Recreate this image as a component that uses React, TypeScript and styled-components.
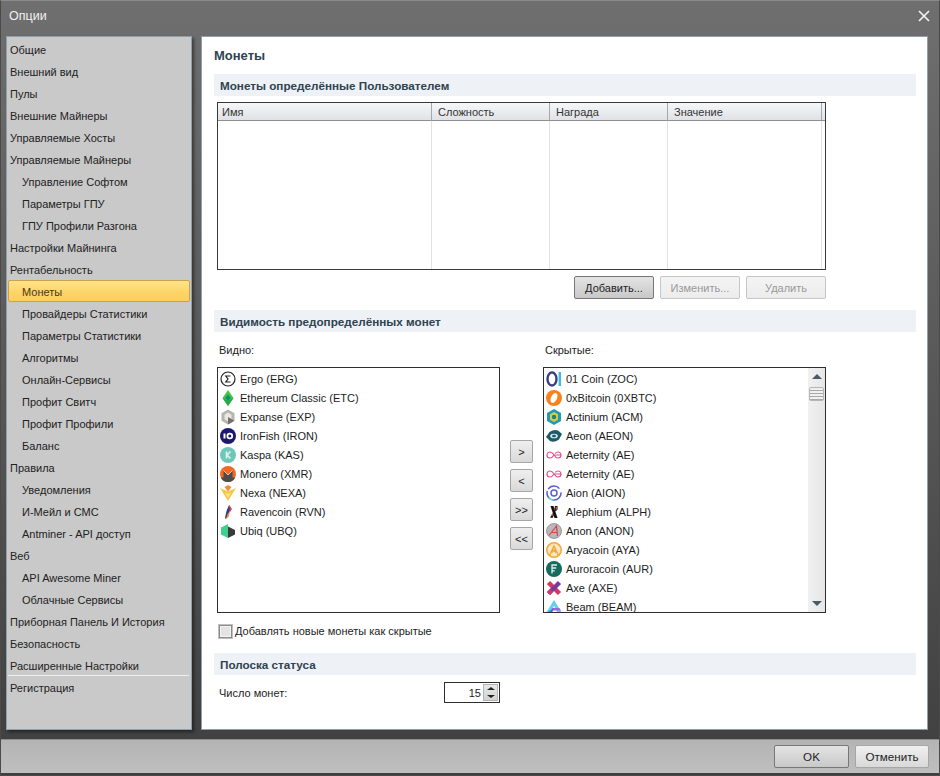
import React from "react";
import styled, { createGlobalStyle } from "styled-components";

const GlobalStyle = createGlobalStyle`
  html, body {
    margin: 0;
    padding: 0;
  }
  body {
    font-family: "Liberation Sans", Arial, sans-serif;
    font-size: 11px;
    color: #1c1c1c;
  }
`;

const Window = styled.div`
  width: 940px;
  height: 776px;
  display: flex;
  flex-direction: column;
  box-sizing: border-box;
  background: linear-gradient(#6f6f6f 0, #666 150px, #3f3f3f 100%);
  border: 1px solid #4a4a4a;
  border-top-color: #8a8a8a;
  overflow: hidden;
`;

const TitleBar = styled.div`
  height: 35px;
  flex-shrink: 0;
  display: flex;
  align-items: center;
  justify-content: space-between;
  padding: 0 9px 6px 8px;
  box-sizing: border-box;
  color: #f2f2f2;
  font-size: 12.5px;
`;

const CloseIcon = styled.svg`
  width: 12px;
  height: 12px;
  stroke: #f4f4f4;
  stroke-width: 1.6;
`;

const Body = styled.div`
  flex: 1;
  display: flex;
  gap: 9px;
  padding: 0 11px 9px 5px;
  min-height: 0;
`;

const Sidebar = styled.nav`
  width: 186px;
  box-sizing: border-box;
  flex-shrink: 0;
  padding: 2px 1px 0 1px;
  background: #c9c9c9;
  border: 1px solid #8ea0ac;
  box-shadow: 2px 2px 3px rgba(0, 0, 0, 0.45);
`;

const NavItem = styled.div<{ $sub?: boolean; $active?: boolean; $sep?: boolean }>`
  height: 22px;
  box-sizing: border-box;
  display: flex;
  align-items: center;
  padding-left: ${(p) => (p.$sub ? 14 : 2)}px;
  color: #222;
  border-radius: 2px;
  ${(p) =>
    p.$sep &&
    `
    height: 24px;
    margin: -2px 1px 0 0;
    padding-top: 1px;
    border-top: 1px solid #efefef;
    border-radius: 0;
  `}
  ${(p) =>
    p.$active &&
    `
    background: linear-gradient(#ffe48c, #fdd468 55%, #fccf5e);
    border: 1px solid #c9a24a;
    margin: -1px 0 1px;
    padding: 2px 0 0 13px;
    color: #4a3a10;
  `}
`;

const Main = styled.main`
  flex: 1;
  box-sizing: border-box;
  background: #fff;
  border: 1px solid #8ea0ac;
  padding: 7px 11px 0 12px;
  display: flex;
  flex-direction: column;
`;

const PageTitle = styled.h1`
  margin: 0 0 8px;
  height: 22px;
  font-size: 13px;
  font-weight: bold;
  color: #2f4350;
  display: flex;
  align-items: center;
`;

const SectionHeader = styled.div<{ $top?: number }>`
  height: 22px;
  margin-top: ${(p) => p.$top ?? 0}px;
  padding: 1px 0 0 6px;
  box-sizing: border-box;
  display: flex;
  align-items: center;
  background: #eef1f6;
  color: #2f4350;
  font-weight: bold;
  font-size: 11.7px;
`;

const Table = styled.div`
  width: 609px;
  height: 168px;
  margin: 6px 0 0 3px;
  box-sizing: border-box;
  border: 1px solid #3a3a3a;
  display: grid;
  grid-template-columns: 214px 118px 118px 154px 1fr;
  grid-template-rows: 18px 1fr;
`;

const HeadCell = styled.div`
  display: flex;
  align-items: center;
  padding-left: 6px;
  background: linear-gradient(#f6f7f9, #dfe2e6);
  border-right: 1px solid #a8a8a8;
  border-bottom: 1px solid #8e8e8e;
  color: #333;
  &:first-child {
    padding-left: 4px;
  }
  &:empty {
    padding: 0;
    border-right: 0;
  }
`;

const BodyCell = styled.div`
  border-right: 1px solid #e2e2e2;
`;

const ButtonRow = styled.div`
  width: 609px;
  margin: 6px 0 0 3px;
  display: flex;
  justify-content: flex-end;
  gap: 6px;
`;

const Button = styled.button<{ $w: number; $large?: boolean; $strong?: boolean }>`
  width: ${(p) => p.$w}px;
  height: 23px;
  padding: 0;
  font: inherit;
  font-size: ${(p) => (p.$large ? 11.6 : 11)}px;
  border-radius: 2px;
  color: #222;
  background: ${(p) => (p.$strong ? "linear-gradient(#e4e4e4, #c8c8c8)" : "linear-gradient(#efefef, #d9d9d9)")};
  border: 1px solid ${(p) => (p.$strong ? "#777" : "#a6a6a6")};
  &:disabled {
    color: #9a9a9a;
    background: linear-gradient(#f4f4f4, #ececec);
    border-color: #c6c6c6;
  }
`;

const Lists = styled.div`
  margin: 8px 0 0 3px;
  width: 609px;
  display: grid;
  grid-template-columns: 283px 43px 283px;
`;

const ListLabel = styled.div<{ $span?: boolean }>`
  height: 27px;
  padding: 4px 0 0 2px;
  box-sizing: border-box;
  grid-column: ${(p) => (p.$span ? "2 / 4" : "auto")};
  ${(p) => p.$span && "padding-left: 45px;"}
`;

const ListBox = styled.div`
  height: 246px;
  box-sizing: border-box;
  border: 1px solid #2e2e2e;
  display: flex;
  overflow: hidden;
  padding: 1px 0 0 2px;
  position: relative;
`;

const ListRows = styled.div`
  flex: 1;
`;

const Row = styled.div`
  height: 19px;
  display: flex;
  align-items: center;
  gap: 4px;
  white-space: nowrap;
`;

const MoveButtons = styled.div`
  display: flex;
  flex-direction: column;
  align-items: center;
  gap: 6px;
  padding-top: 73px;
`;

const ScrollBar = styled.div`
  width: 17px;
  flex-shrink: 0;
  display: flex;
  flex-direction: column;
  align-items: center;
  justify-content: space-between;
  background: linear-gradient(90deg, #f1f1f1, #e6e6e6);
  margin-top: -1px;
  padding: 6px 0;
  position: relative;
`;

const Thumb = styled.div`
  position: absolute;
  top: 19px;
  left: 1px;
  width: 13px;
  height: 12px;
  border: 1px solid #b5b5b5;
  border-radius: 2px;
  background: repeating-linear-gradient(#f0f0f0 0, #f0f0f0 2px, #a9a9a9 2px, #a9a9a9 3px);
`;

const Arrow = styled.div<{ $down?: boolean }>`
  width: 0;
  height: 0;
  border-left: 5px solid transparent;
  border-right: 5px solid transparent;
  ${(p) => (p.$down ? "border-top: 5px solid #4a5a66;" : "border-bottom: 5px solid #4a5a66;")}
`;

const CheckRow = styled.label`
  margin: 10px 0 0 5px;
  height: 16px;
  display: flex;
  align-items: center;
  gap: 3px;
`;

const CheckBox = styled.span`
  width: 11px;
  height: 11px;
  border: 1px solid #8a8a8a;
  outline: 1px solid #c0c0c0;
  background: #e3e3e3;
  box-shadow: inset 0 0 0 1px #f4f4f4;
`;

const SpinRow = styled.div`
  margin: 7px 0 0 5px;
  width: 281px;
  display: flex;
  align-items: center;
  justify-content: space-between;
`;

const Spinner = styled.div`
  width: 56px;
  height: 21px;
  box-sizing: border-box;
  border: 1px solid #2e2e2e;
  display: flex;
  justify-content: flex-end;
  align-items: center;
`;

const SpinValue = styled.span`
  margin-right: 2px;
`;

const SpinButtons = styled.div`
  width: 15px;
  height: 17px;
  margin-right: 1px;
  display: flex;
  flex-direction: column;
  align-items: center;
  justify-content: space-around;
  background: linear-gradient(#e8e8e8, #d2d2d2);
  border: 1px solid #b4b4b4;
  box-sizing: border-box;
`;

const SpinArrow = styled.div<{ $down?: boolean }>`
  width: 0;
  height: 0;
  border-left: 4px solid transparent;
  border-right: 4px solid transparent;
  ${(p) => (p.$down ? "border-top: 3px solid #222;" : "border-bottom: 3px solid #222;")}
`;

const Footer = styled.footer`
  height: 34px;
  flex-shrink: 0;
  margin-bottom: 2px;
  display: flex;
  align-items: center;
  justify-content: flex-end;
  gap: 6px;
  padding-right: 10px;
  background: linear-gradient(#b4b4b4, #bfbfbf);
  border-top: 1px solid #8d8d8d;
  box-sizing: border-box;
`;

const navItems: { label: string; sub?: boolean; active?: boolean; sep?: boolean }[] = [
  { label: "Общие" },
  { label: "Внешний вид" },
  { label: "Пулы" },
  { label: "Внешние Майнеры" },
  { label: "Управляемые Хосты" },
  { label: "Управляемые Майнеры" },
  { label: "Управление Софтом", sub: true },
  { label: "Параметры ГПУ", sub: true },
  { label: "ГПУ Профили Разгона", sub: true },
  { label: "Настройки Майнинга" },
  { label: "Рентабельность" },
  { label: "Монеты", sub: true, active: true },
  { label: "Провайдеры Статистики", sub: true },
  { label: "Параметры Статистики", sub: true },
  { label: "Алгоритмы", sub: true },
  { label: "Онлайн-Сервисы", sub: true },
  { label: "Профит Свитч", sub: true },
  { label: "Профит Профили", sub: true },
  { label: "Баланс", sub: true },
  { label: "Правила" },
  { label: "Уведомления", sub: true },
  { label: "И-Мейл и СМС", sub: true },
  { label: "Antminer - API доступ", sub: true },
  { label: "Веб" },
  { label: "API Awesome Miner", sub: true },
  { label: "Облачные Сервисы", sub: true },
  { label: "Приборная Панель И История" },
  { label: "Безопасность" },
  { label: "Расширенные Настройки" },
  { label: "Регистрация", sep: true },
];

const icons: Record<string, React.ReactNode> = {
  ERG: (
    <>
      <circle cx="8" cy="8" r="7" fill="#fff" stroke="#222" strokeWidth="1.2" />
      <path d="M10.5 5H5.8L8 8l-2.2 3h4.7" fill="none" stroke="#222" strokeWidth="1.2" />
    </>
  ),
  ETC: (
    <>
      <path d="M8 0 13.500 8 8 16 2.500 8Z" fill="#43c64a" />
      <path d="M8 4.500 11 8 8 10.500 5 8Z" fill="#0f8f73" />
      <path d="M2.500 8 8 10.500 13.500 8 8 16Z" fill="#2aa84a" />
    </>
  ),
  EXP: (
    <>
      <path d="M8 0.500 14.500 4.200v7.600L8 15.500 1.500 11.800V4.200Z" fill="#b9b4ae" />
      <path d="M8 3.500 11.500 5.700v4.600L8 12.500 4.500 10.300V5.700Z" fill="#ece9e4" />
      <path d="M8 8 14.500 11.800 8 15.500Z" fill="#77706a" />
    </>
  ),
  IRON: (
    <>
      <circle cx="8" cy="8" r="8" fill="#1d1a6e" />
      <path d="M4.500 5.500v5" stroke="#fff" strokeWidth="2" />
      <circle cx="9.800" cy="8" r="2.400" fill="none" stroke="#fff" strokeWidth="1.800" />
    </>
  ),
  KAS: (
    <>
      <circle cx="8" cy="8" r="8" fill="#6fc7ba" />
      <path d="M6.500 4.500v7M10.500 4.500 7 8l3.500 3.500" fill="none" stroke="#dff5f1" strokeWidth="1.600" />
    </>
  ),
  XMR: (
    <>
      <circle cx="8" cy="8" r="8" fill="#f26822" />
      <path d="M0.800 11.500H3.500V4.500L8 9l4.500-4.500v7h2.700A8 8 0 0 1 0.800 11.500Z" fill="#4c4c4c" />
      <path d="M3.500 4.500 8 9l4.500-4.500" fill="none" stroke="#f8e0d0" strokeWidth="0.800" />
    </>
  ),
  NEXA: (
    <>
      <path d="M0 3 8 6.500 16 3 8 16Z" fill="#f6c945" />
      <path d="M4.500 2 8 6.500 11.500 2 8 0Z" fill="#f08a3c" />
      <path d="M5 7.500 8 13l3-5.500L8 9Z" fill="#fbe58a" />
    </>
  ),
  RVN: (
    <>
      <path d="M9 1 11 4 9 9 6 15 5 14 6.500 7Z" fill="#2f3d90" />
      <path d="M9 1 12 5 10 8Z" fill="#e8423d" />
      <path d="M6 15 8 9 10 8 8.500 13Z" fill="#f2913b" />
    </>
  ),
  UBQ: (
    <>
      <path d="M8 1 1 4.500v7L8 15Z" fill="#3fd18c" />
      <path d="M8 3.500 15 7v4.500L8 15Z" fill="#3a3a3a" />
    </>
  ),
  ZOC: (
    <>
      <ellipse cx="6" cy="8" rx="4.500" ry="6.500" fill="none" stroke="#3b3f7c" strokeWidth="2.400" />
      <path d="M13.800 1v14" stroke="#3db8e8" strokeWidth="2.400" />
    </>
  ),
  "0XBTC": (
    <>
      <circle cx="8" cy="8" r="8" fill="#f7821b" />
      <ellipse cx="8" cy="8" rx="3" ry="5.200" transform="rotate(25 8 8)" fill="#fff" />
    </>
  ),
  ACM: (
    <>
      <path d="M8 0 15 4v8L8 16 1 12V4Z" fill="#1f9bb8" />
      <path d="M8 3 12 5.300v5.400L8 13 4 10.700V5.300Z" fill="#d7cf3a" />
      <circle cx="8" cy="8" r="2.200" fill="#1f7f94" />
    </>
  ),
  AEON: (
    <>
      <path d="M0 9 3.500 4Q8 1 12 2.500L16 6l-3 5.500Q8 15 4 13Z" fill="#1e5a68" />
      <ellipse cx="8" cy="8" rx="3.800" ry="2.300" fill="#d8e8ec" />
      <ellipse cx="8" cy="8" rx="2" ry="1.200" fill="#1e5a68" />
    </>
  ),
  AE: (
    <path
      d="M8 8C6.500 5.500 5.500 5 4 5a3 3 0 0 0 0 6c1.500 0 2.500-.5 4-3Zm0 0c1.500 2.500 2.500 3 4 3a3 3 0 0 0 0-6c-1 0-2 .4-2.800 1.500M8.500 8H15"
      fill="none"
      stroke="#e2518f"
      strokeWidth="1.200"
    />
  ),
  AION: (
    <>
      <circle cx="8" cy="8" r="7" fill="none" stroke="#5b5fd6" strokeWidth="1.500" strokeDasharray="13 2 9 2 13 4" />
      <path d="M2.500 12.500A7 7 0 0 0 8 15" fill="none" stroke="#5fd8c4" strokeWidth="1.500" />
      <circle cx="8" cy="8" r="3" fill="none" stroke="#5b5fd6" strokeWidth="1.500" />
    </>
  ),
  ALPH: (
    <>
      <path d="M4.500 2h3l4 12h-3Z" fill="#111" />
      <path d="M4 13.500 7 9l1.200 1.500L6.500 14ZM9 2h2.500v3.500L9.500 7.500 8.500 5Z" fill="#111" />
      <path d="M5 11.500 6.800 9.300 7.500 10.500 6 12.500ZM9.500 3h1.500v2L9.800 6.500Z" fill="#e0483a" />
    </>
  ),
  ANON: (
    <>
      <circle cx="8" cy="8" r="7.500" fill="#b8b8b8" stroke="#8a8a8a" strokeWidth="0.800" />
      <path d="M3 12.500 10.500 3l1 10M6 9.500h5" fill="none" stroke="#d8434a" strokeWidth="1.200" />
    </>
  ),
  AYA: (
    <>
      <circle cx="8" cy="8" r="7.200" fill="#fbe8c0" stroke="#f2a93b" strokeWidth="1.600" />
      <path d="M3.800 13 8 4l4.200 9M6 10.500 8 8l2 2.500" fill="none" stroke="#f2a93b" strokeWidth="1.500" />
    </>
  ),
  AUR: (
    <>
      <circle cx="8" cy="8" r="8" fill="#136c5e" />
      <path d="M6 12.500V4h5M6 7h4.200M6 9.800h2.800" fill="none" stroke="#dff1ec" strokeWidth="1.300" />
    </>
  ),
  AXE: (
    <>
      <path d="M2.500 2.500 13.500 13.500" stroke="#d8345f" strokeWidth="4.500" />
      <path d="M13.500 2.500 2.500 13.500" stroke="#7a3a9c" strokeWidth="4.500" />
      <path d="M5.500 10.500 2.500 13.500" stroke="#d8345f" strokeWidth="4.500" />
    </>
  ),
  BEAM: (
    <>
      <path d="M0 14 8 1l8 13Z" fill="#5fd0ee" />
      <path d="M4.500 14 8 6.500l3.500 7.500Z" fill="#fff" />
      <path d="M6 9h7.500l1.500 2.500H5Z" fill="#a764d8" />
      <path d="M0.500 14 8 9l-2 5Z" fill="#2b7fd8" />
    </>
  ),
};

const visibleCoins: [string, string][] = [
  ["ERG", "Ergo (ERG)"],
  ["ETC", "Ethereum Classic (ETC)"],
  ["EXP", "Expanse (EXP)"],
  ["IRON", "IronFish (IRON)"],
  ["KAS", "Kaspa (KAS)"],
  ["XMR", "Monero (XMR)"],
  ["NEXA", "Nexa (NEXA)"],
  ["RVN", "Ravencoin (RVN)"],
  ["UBQ", "Ubiq (UBQ)"],
];

const hiddenCoins: [string, string][] = [
  ["ZOC", "01 Coin (ZOC)"],
  ["0XBTC", "0xBitcoin (0XBTC)"],
  ["ACM", "Actinium (ACM)"],
  ["AEON", "Aeon (AEON)"],
  ["AE", "Aeternity (AE)"],
  ["AE", "Aeternity (AE)"],
  ["AION", "Aion (AION)"],
  ["ALPH", "Alephium (ALPH)"],
  ["ANON", "Anon (ANON)"],
  ["AYA", "Aryacoin (AYA)"],
  ["AUR", "Auroracoin (AUR)"],
  ["AXE", "Axe (AXE)"],
  ["BEAM", "Beam (BEAM)"],
];

const CoinList = ({ coins }: { coins: [string, string][] }) => (
  <ListRows>
    {coins.map(([code, name], i) => (
      <Row key={i}>
        <svg width="16" height="16" viewBox="0 0 16 16">
          {icons[code]}
        </svg>
        {name}
      </Row>
    ))}
  </ListRows>
);

export default function App() {
  return (
    <Window>
      <GlobalStyle />
      <TitleBar>
        Опции
        <CloseIcon viewBox="0 0 12 12">
          <path d="M1 1l10 10M11 1L1 11" />
        </CloseIcon>
      </TitleBar>
      <Body>
        <Sidebar>
          {navItems.map((item) => (
            <NavItem key={item.label} $sub={item.sub} $active={item.active} $sep={item.sep}>
              {item.label}
            </NavItem>
          ))}
        </Sidebar>
        <Main>
          <PageTitle>Монеты</PageTitle>
          <SectionHeader>Монеты определённые Пользователем</SectionHeader>
          <Table>
            <HeadCell>Имя</HeadCell>
            <HeadCell>Сложность</HeadCell>
            <HeadCell>Награда</HeadCell>
            <HeadCell>Значение</HeadCell>
            <HeadCell />
            <BodyCell />
            <BodyCell />
            <BodyCell />
            <BodyCell />
            <div />
          </Table>
          <ButtonRow>
            <Button $w={80} $strong>Добавить...</Button>
            <Button $w={80} disabled>Изменить...</Button>
            <Button $w={80} disabled>Удалить</Button>
          </ButtonRow>
          <SectionHeader $top={11}>Видимость предопределённых монет</SectionHeader>
          <Lists>
            <ListLabel>Видно:</ListLabel>
            <ListLabel $span>Скрытые:</ListLabel>
            <ListBox>
              <CoinList coins={visibleCoins} />
            </ListBox>
            <MoveButtons>
              <Button $w={23}>&gt;</Button>
              <Button $w={23}>&lt;</Button>
              <Button $w={23}>&gt;&gt;</Button>
              <Button $w={23}>&lt;&lt;</Button>
            </MoveButtons>
            <ListBox>
              <CoinList coins={hiddenCoins} />
              <ScrollBar>
                <Arrow />
                <Thumb />
                <Arrow $down />
              </ScrollBar>
            </ListBox>
          </Lists>
          <CheckRow>
            <CheckBox />
            Добавлять новые монеты как скрытые
          </CheckRow>
          <SectionHeader $top={14}>Полоска статуса</SectionHeader>
          <SpinRow>
            Число монет:
            <Spinner>
              <SpinValue>15</SpinValue>
              <SpinButtons>
                <SpinArrow />
                <SpinArrow $down />
              </SpinButtons>
            </Spinner>
          </SpinRow>
        </Main>
      </Body>
      <Footer>
        <Button $w={75} $large $strong>OK</Button>
        <Button $w={74} $large>Отменить</Button>
      </Footer>
    </Window>
  );
}
